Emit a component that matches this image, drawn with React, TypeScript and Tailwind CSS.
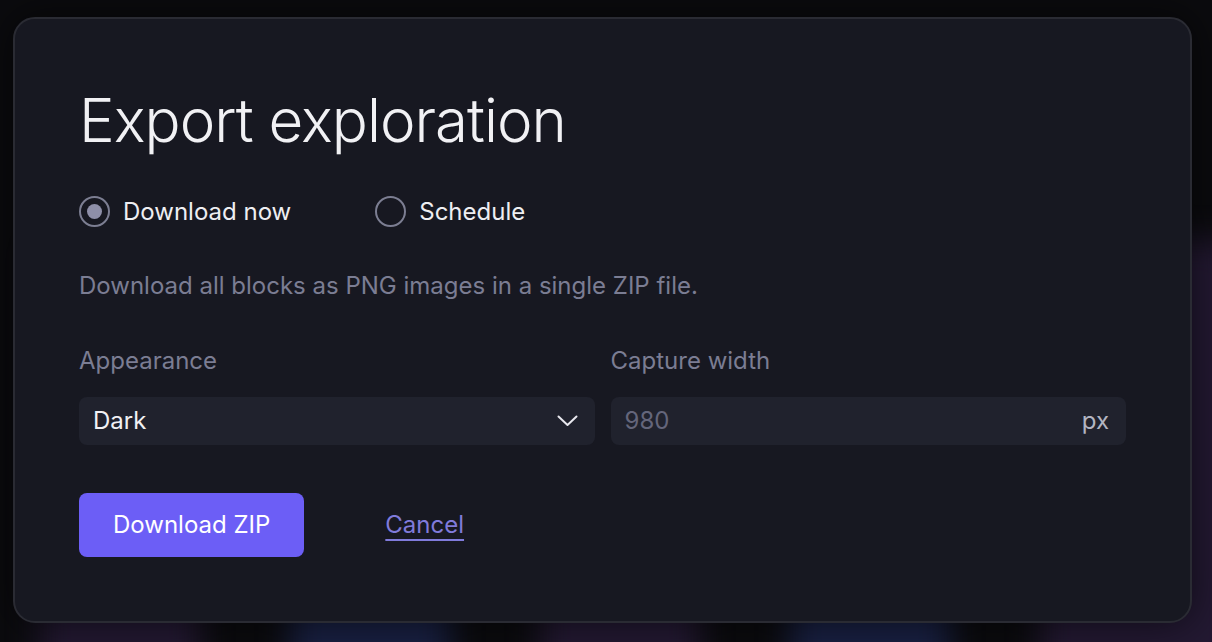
import { FC } from "react";

const blobs = [
  "bg-[#2a1d3c]",
  "bg-[#1d2650]",
  "bg-[#2a1d3c]",
  "bg-[#1d2650]",
  "bg-[#2a1d3c]",
];

const Backdrop: FC = () => (
  <div className="flex gap-[90px] pl-[40px] pt-[240px] blur-lg opacity-80">
    {blobs.map((c, i) => (
      <div
        key={i}
        className={`h-[440px] w-[160px] shrink-0 rounded-2xl ${c} ${i === 4 ? "w-[200px]" : ""}`}
      />
    ))}
  </div>
);

const Radio: FC<{ label: string; checked?: boolean }> = ({ label, checked }) => (
  <label className="flex items-center gap-[13px] cursor-pointer">
    <span className="flex h-[31px] w-[31px] items-center justify-center rounded-full border-2 border-[#7c7e92]">
      {checked && <span className="h-[15px] w-[15px] rounded-full bg-[#8e8fa8]" />}
    </span>
    <span className="text-[24px] leading-[28px] text-[#eeeef2]">{label}</span>
  </label>
);

const App: FC = () => {
  return (
    <div
      className="relative h-[642px] w-full overflow-hidden bg-[#0b0b0e]"
      style={{ fontFamily: "Inter, 'Noto Sans', sans-serif" }}
    >
      <Backdrop />

      <div className="absolute left-[13px] top-[17px] h-[606px] w-[1179px] rounded-[22px] border-2 border-[#2a2b33] bg-[#171821] pl-[64px] pr-[64px] pt-[69px] shadow-[0_0_40px_rgba(0,0,0,0.6)]">
        <h1 className="text-[60px] font-light leading-[64px] tracking-[-1px] text-[#f1f1f4]">
          Export exploration
        </h1>

        <div className="mt-[44px] flex items-center gap-[84px]">
          <Radio label="Download now" checked />
          <Radio label="Schedule" />
        </div>

        <p className="mt-[45px] text-[24px] leading-[28px] text-[#7b7d93]">
          Download all blocks as PNG images in a single ZIP file.
        </p>

        <div className="mt-[47px] grid grid-cols-2 gap-x-[16px]">
          <div>
            <div className="text-[24px] leading-[28px] text-[#7b7d93]">Appearance</div>
            <button className="mt-[22px] flex h-[48px] w-full items-center justify-between rounded-[8px] bg-[#20222d] pl-[14px] pr-[17px] text-left">
              <span className="text-[24px] text-[#f1f1f4]">Dark</span>
              <svg width="21" height="12" viewBox="0 0 21 12" fill="none">
                <polyline
                  points="1.5,1.5 10.5,10 19.5,1.5"
                  stroke="#e8e8ee"
                  strokeWidth="2"
                  strokeLinecap="round"
                  strokeLinejoin="round"
                />
              </svg>
            </button>
          </div>
          <div>
            <div className="text-[24px] leading-[28px] text-[#7b7d93]">Capture width</div>
            <div className="mt-[22px] flex h-[48px] w-full items-center rounded-[8px] bg-[#20222d] pl-[14px] pr-[17px]">
              <input
                className="min-w-0 flex-1 bg-transparent text-[24px] text-[#f1f1f4] outline-none placeholder:text-[#64667b]"
                placeholder="980"
              />
              <span className="text-[24px] text-[#b3b5c2]">px</span>
            </div>
          </div>
        </div>

        <div className="mt-[48px] flex items-center gap-[81px]">
          <button className="h-[64px] rounded-[8px] bg-[#6c5ef6] px-[34px] text-[24px] text-white">
            Download ZIP
          </button>
          <a
            href="#"
            className="text-[24px] text-[#807bdb] underline underline-offset-[6px] decoration-[2px]"
          >
            Cancel
          </a>
        </div>
      </div>
    </div>
  );
};

export default App;
